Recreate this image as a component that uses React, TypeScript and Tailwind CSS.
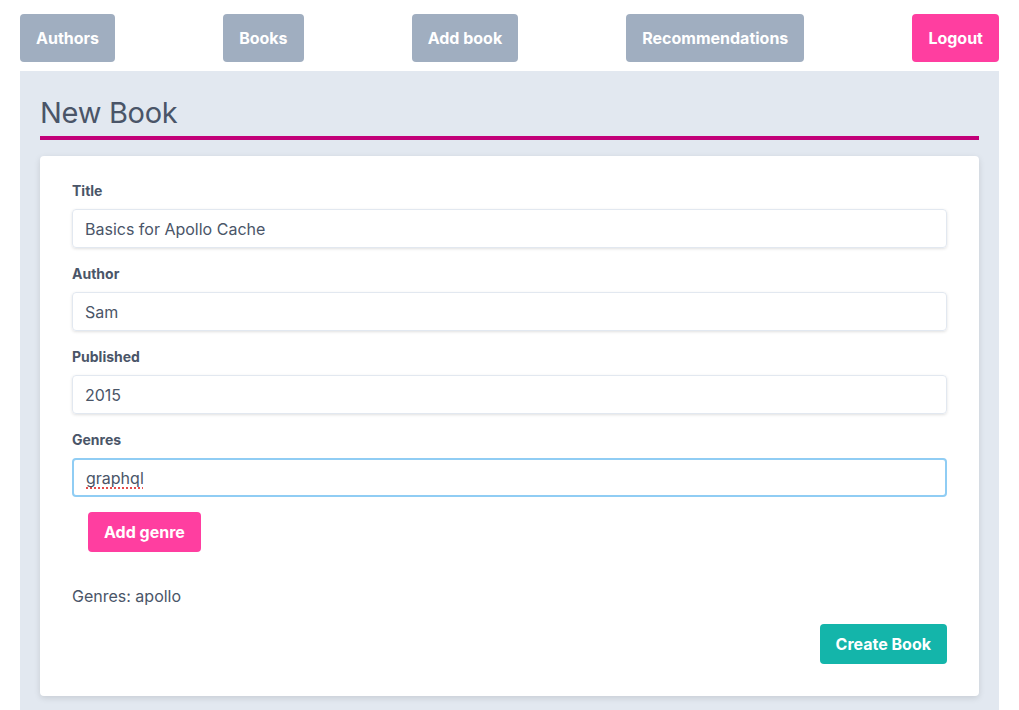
import React from "react";

const navBtn =
	"bg-[#a0aec0] text-white font-bold text-base px-4 py-3 rounded leading-6";

const Field = ({ label, value }: { label: string; value: string }) => (
	<div className="mb-4">
		<label className="block text-sm font-bold text-[#4a5568] mb-2 leading-5">{label}</label>
		<input
			readOnly
			value={value}
			className="w-full h-[39px] border border-[#e2e8f0] rounded shadow-[0_1px_3px_rgba(0,0,0,0.12)] px-3 text-base text-[#4a5568] outline-none"
		/>
	</div>
);

const App = () => {
	return (
		<div className="min-h-[710px] bg-white font-['Inter',sans-serif]">
			<nav className="flex justify-between px-5 pt-[14px] pb-[9px]">
				<button className={navBtn}>Authors</button>
				<button className={navBtn}>Books</button>
				<button className={navBtn}>Add book</button>
				<button className={navBtn}>Recommendations</button>
				<button className="bg-[#ff3ea0] text-white font-bold text-base px-4 py-3 rounded leading-6">
					Logout
				</button>
			</nav>
			<div className="mx-5 bg-[#e2e8f0] px-5 pt-[22px] pb-4 min-h-[640px]">
				<h1 className="text-[29px] leading-10 text-[#4a5568] border-b-4 border-[#c20078] pb-[3px] tracking-[-0.3px]">
					New Book
				</h1>
				<div className="mt-4 bg-white rounded shadow-[0_2px_6px_rgba(0,0,0,0.12)] px-8 pt-[25px] pb-8">
					<Field label="Title" value="Basics for Apollo Cache" />
					<Field label="Author" value="Sam" />
					<Field label="Published" value="2015" />
					<div>
						<label className="block text-sm font-bold text-[#4a5568] mb-2 leading-5">Genres</label>
						<div className="w-full h-[39px] border-2 border-[#90cdf4] rounded px-3 flex items-center text-base text-[#4a5568]">
							<span className="underline decoration-dotted decoration-[#e02020] underline-offset-4">graphql</span>
						</div>
					</div>
					<button className="mx-4 mt-[15px] mb-4 bg-[#ff3ea0] text-white font-bold text-base px-4 py-2 rounded leading-6">
						Add genre
					</button>
					<p className="my-4 text-base text-[#4a5568] leading-6">Genres: apollo</p>
					<div className="flex justify-end">
						<button className="bg-[#14b5aa] text-white font-bold text-base px-4 py-2 rounded leading-6">
							Create Book
						</button>
					</div>
				</div>
			</div>
		</div>
	);
};

export default App;
